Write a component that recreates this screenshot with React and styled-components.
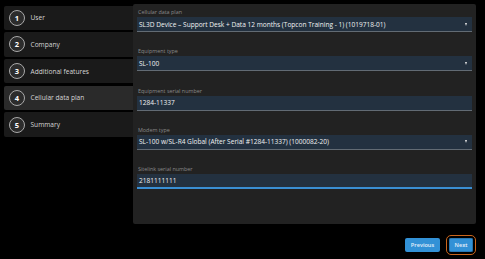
import React from "react";
import styled, { createGlobalStyle } from "styled-components";

const Global = createGlobalStyle`
  html, body { margin: 0; padding: 0; background: #000; }
  body { font-family: "Open Sans", "Liberation Sans", sans-serif; -webkit-font-smoothing: antialiased; }
  * { box-sizing: border-box; }
`;

const Page = styled.div`
  width: 485px;
  height: 259px;
  background: #000;
  padding: 4px 9px 0 4px;
  display: flex;
  flex-direction: column;
`;

const Main = styled.div`
  display: flex;
  align-items: flex-start;
`;

const Steps = styled.ul`
  list-style: none;
  margin: 1.5px 0 0 0;
  padding: 0;
  width: 129px;
  display: flex;
  flex-direction: column;
  gap: 2.2px;
`;

const Step = styled.li`
  height: 24.5px;
  display: flex;
  align-items: center;
  padding-left: 5px;
  gap: 5.5px;
  border-radius: 2px 0 0 2px;
  background: ${(p) => (p.$active ? "#2a2a2a" : "#1a1a1a")};
  color: #d6d6d6;
  font-size: 6.6px;
`;

const Circle = styled.span`
  width: 16px;
  height: 16px;
  border-radius: 50%;
  border: 1.5px solid #a9a9a9;
  background: #2c2c2c;
  color: #fff;
  font-weight: 700;
  font-size: 7.5px;
  display: flex;
  align-items: center;
  justify-content: center;
`;

const Panel = styled.div`
  width: 343px;
  height: 220px;
  background: #222222;
  border-radius: 2px;
  padding: 4px 4px 0 4px;
  display: flex;
  flex-direction: column;
  gap: 15.25px;
`;

const Field = styled.div`
  display: flex;
  flex-direction: column;
`;

const Label = styled.div`
  height: 8px;
  line-height: 8px;
  margin-bottom: 1px;
  font-size: 5.4px;
  color: #8a8a8a;
  padding-left: 1px;
`;

const Box = styled.div`
  height: 15px;
  background: #233140;
  border-bottom: ${(p) => (p.$focused ? "2px solid #3a8fd4" : "1px solid #626b74")};
  display: flex;
  align-items: center;
  justify-content: space-between;
  padding: 0 4px 0 2px;
  color: #f2f2f2;
  font-size: 6.55px;
  white-space: nowrap;
`;

const Caret = styled.span`
  width: 0;
  height: 0;
  border-left: 1.5px solid transparent;
  border-right: 1.5px solid transparent;
  border-top: 3px solid #e6e6e6;
  margin-right: 1px;
`;

const Footer = styled.div`
  display: flex;
  justify-content: flex-end;
  gap: 9px;
  margin-top: 14px;
  padding-right: 3px;
`;

const Button = styled.button`
  height: 14px;
  width: ${(p) => p.$w}px;
  padding: 0;
  border: none;
  border-radius: 2px;
  background: #3291d6;
  color: #e4f0fa;
  font-family: "Open Sans", "Liberation Sans", sans-serif;
  font-size: 5.6px;
  font-weight: 600;
  cursor: pointer;
  outline: ${(p) => (p.$focus ? "1px solid #c9651c" : "none")};
  outline-offset: 2px;
  box-shadow: ${(p) => (p.$focus ? "inset 0 0 0 0.6px #1c5f92" : "none")};
`;

const steps = ["User", "Company", "Additional features", "Cellular data plan", "Summary"];

const fields = [
  { label: "Cellular data plan", value: "SL3D Device – Support Desk + Data 12 months (Topcon Training - 1) (1019718-01)", select: true },
  { label: "Equipment type", value: "SL-100", select: true },
  { label: "Equipment serial number", value: "1284-11337" },
  { label: "Modem type", value: "SL-100 w/SL-R4 Global (After Serial #1284-11337) (1000082-20)", select: true },
  { label: "Sitelink serial number", value: "2181111111", focused: true },
];

export default function App() {
  return (
    <>
      <Global />
      <Page>
        <Main>
          <Steps>
            {steps.map((s, i) => (
              <Step key={s} $active={i === 3}>
                <Circle>{i + 1}</Circle>
                {s}
              </Step>
            ))}
          </Steps>
          <Panel>
            {fields.map((f) => (
              <Field key={f.label}>
                <Label>{f.label}</Label>
                <Box $focused={f.focused}>
                  <span>{f.value}</span>
                  {f.select && <Caret />}
                </Box>
              </Field>
            ))}
          </Panel>
        </Main>
        <Footer>
          <Button $w={35}>Previous</Button>
          <Button $w={24} $focus>Next</Button>
        </Footer>
      </Page>
    </>
  );
}
